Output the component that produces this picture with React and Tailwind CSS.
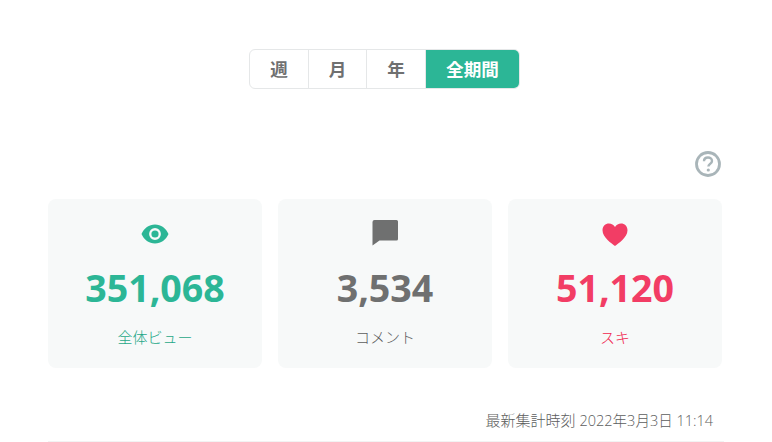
function Card({ icon, value, label, color, labelColor }) {
  return (
    <div className={`h-[169px] w-[214px] rounded-lg bg-[#f7f9f9] flex flex-col items-center ${color}`}>
      <div className="h-6 mt-[23px] flex items-center justify-center">{icon}</div>
      <div className="mt-[17px] text-[37.6px] leading-[50px] font-bold">{value}</div>
      <div className={`mt-[12px] text-[15px] leading-[24px] font-light ${labelColor}`}>{label}</div>
    </div>
  );
}
export default function App() {
  const tabs = [["週", "w-[59px]"], ["月", "w-[58px]"], ["年", "w-[59px]"]];
  return (
    <div className="w-[772px] h-[442px] overflow-hidden bg-white text-[#6f7070] font-['Open_Sans','Noto_Sans_CJK_JP',sans-serif]">
      <div className="flex justify-center pt-[49px] pr-[3px]">
        <div className="flex h-10 w-[271px] rounded-md border border-[#e5e7e8] overflow-hidden text-[17.6px] font-bold">
          {tabs.map(([t, w]) => (
            <div key={t} className={`${w} flex items-center justify-center border-r border-[#e5e7e8]`}>{t}</div>
          ))}
          <div className="flex-1 flex items-center justify-center bg-[#2cb696] text-white">全期間</div>
        </div>
      </div>
      <div className="mx-[48px] mt-[61px] flex justify-end pr-[2px]">
        <svg width="28" height="28" viewBox="0 0 28 28" fill="none" className="text-[#a9b5b9]">
          <circle cx="14" cy="14" r="11.500" stroke="currentColor" strokeWidth="2.800" />
          <path d="M10 11.200c0-2.300 1.800-3.700 4-3.700s4 1.400 4 3.400c0 1.600-.9 2.400-2 3.100-1 .7-1.600 1.200-1.600 2.600" stroke="currentColor" strokeWidth="2.400" />
          <circle cx="14.300" cy="20" r="1.600" fill="currentColor" />
        </svg>
      </div>
      <div className="mx-[48px] mt-[21px] flex gap-4">
        <Card color="text-[#2cb696]" labelColor="text-[#1fa888]" value="351,068" label="全体ビュー" icon={
          <svg width="28" height="20" viewBox="0 0 28 20"><path fillRule="evenodd" fill="currentColor" d="M14 .5C8 .5 3 4.200.5 10 3 15.800 8 19.500 14 19.500S25 15.800 27.500 10C25 4.200 20 .5 14 .5Zm0 3.600a5.900 5.900 0 1 1 0 11.800 5.900 5.900 0 0 1 0-11.800Z" /><circle cx="14" cy="10" r="3.600" fill="currentColor" /></svg>
        } />
        <Card color="text-[#6f7070]" labelColor="text-[#5c5d5d]" value="3,534" label="コメント" icon={
          <svg width="26" height="26" viewBox="0 0 26 26" className="-mt-0.5"><path fill="currentColor" d="M2.500 0h22A1.500 1.500 0 0 1 26 1.500V19a1.500 1.500 0 0 1-1.500 1.500H7.500L.5 25.500V2A2 2 0 0 1 2.500 0Z" /></svg>
        } />
        <Card color="text-[#f23d65]" labelColor="text-[#f01f4f]" value="51,120" label="スキ" icon={
          <svg width="26" height="23" viewBox="0 0 26 23"><path fill="currentColor" d="M13 23C10 20.500.5 14.500.5 7.200.5 3.200 3.500.5 6.900.5c2.600 0 4.800 1.400 6.100 3.600C14.300 1.900 16.500.5 19.100.5c3.400 0 6.400 2.700 6.400 6.700C25.500 14.500 16 20.500 13 23Z" /></svg>
        } />
      </div>
      <div className="mx-[48px] mt-[40px] h-[34px] border-b border-[#f2f3f3] pr-[11px] text-right text-[15px] leading-[24px] font-light text-[#5c5d5d]">
        最新集計時刻 <span className="text-[14.500px]">2022年3月3日 11:14</span>
      </div>
    </div>
  );
}
